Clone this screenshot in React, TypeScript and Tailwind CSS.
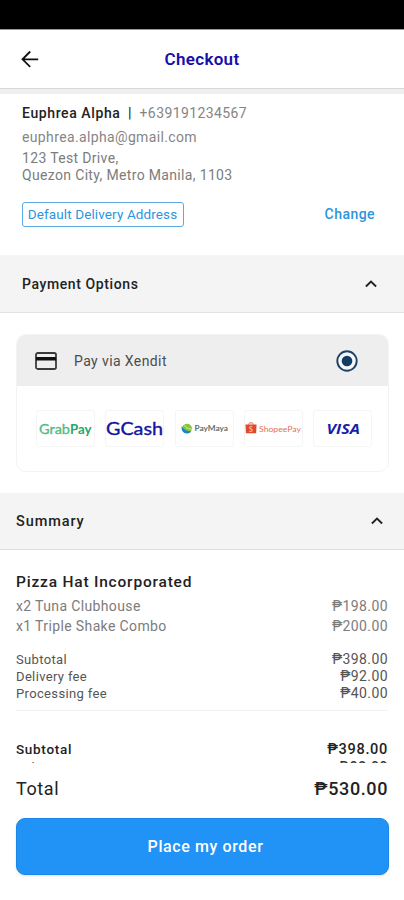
import React from 'react'

interface PriceLine {
  label: string
  amount: string
}

const orderItems: PriceLine[] = [
  { label: 'x2 Tuna Clubhouse', amount: '₱198.00' },
  { label: 'x1 Triple Shake Combo', amount: '₱200.00' },
]

const fees: PriceLine[] = [
  { label: 'Subtotal', amount: '₱398.00' },
  { label: 'Delivery fee', amount: '₱92.00' },
  { label: 'Processing fee', amount: '₱40.00' },
]

const ChevronUp = () => (
  <svg width="12" height="8" viewBox="0 0 12 8" fill="none" stroke="#222" strokeWidth="1.9">
    <path d="M.9 6.5 6 1.5l5.1 5" />
  </svg>
)

const BackArrow = () => (
  <svg width="18" height="18" viewBox="0 0 18 18" fill="none" stroke="#111" strokeWidth="1.8">
    <path d="M17.2 9.3H1.8M9.2 1.5 1.5 9.3l7.7 7.5" />
  </svg>
)

const CardIcon = () => (
  <svg width="22" height="18" viewBox="0 0 22 18" fill="none">
    <rect x="1" y="1" width="20" height="16" rx="1.8" stroke="#3a3a3a" strokeWidth="1.8" />
    <path d="M1 6.8h20" stroke="#111" strokeWidth="3.4" />
  </svg>
)

const RadioOn = () => (
  <svg width="22" height="22" viewBox="0 0 22 22" fill="none">
    <circle cx="11" cy="11" r="9.7" fill="#f6f8fa" stroke="#1d4468" strokeWidth="1.9" />
    <circle cx="11" cy="11" r="5.3" fill="#123c64" />
  </svg>
)

const GrabPay = () => (
  <svg width="58" height="36" viewBox="0 0 58 36" className="font-['Lato',sans-serif]">
    <text x="2" y="22.5" fontSize="13.5" fill="#4fba86" stroke="#4fba86" strokeWidth="0.3" textLength="31" lengthAdjust="spacingAndGlyphs">Grab</text>
    <text x="33" y="22.5" fontSize="13" fontWeight="700" fill="#2aa568" textLength="21.5" lengthAdjust="spacingAndGlyphs">Pay</text>
  </svg>
)

const GCash = () => (
  <svg width="58" height="36" viewBox="0 0 58 36" className="overflow-visible font-['Lato',sans-serif]">
    <text x="0" y="24" fontSize="17.5" fill="#14149c" stroke="#14149c" strokeWidth="0.35" textLength="57" lengthAdjust="spacingAndGlyphs">GCash</text>
  </svg>
)

const PayMaya = () => (
  <svg width="58" height="36" viewBox="0 0 58 36" className="font-['Lato',sans-serif]">
    <ellipse cx="11" cy="17.5" rx="5" ry="4.7" fill="#86c440" />
    <path d="M5.8 15.2c-1 4 1.400 7.200 5.400 7.200 2 0 3.400-.8 4-2.200-3.800.4-7-1-9.400-5Z" fill="#1685c9" />
    <path d="M8.500 13.600c.8 3 3 4.200 7.400 4.600" stroke="#e6f4d6" strokeWidth="0.7" fill="none" />
    <text x="18.500" y="19.700" fontSize="6.500" fontWeight="700" fill="#5b706d" textLength="33.500" lengthAdjust="spacingAndGlyphs">PayMaya</text>
  </svg>
)

const ShopeePay = () => (
  <svg width="58" height="36" viewBox="0 0 58 36" className="font-['Lato',sans-serif]">
    <path d="M.5 13.500h11l-.3 8.800H.9Z" fill="#e04a2c" />
    <path d="M3.500 13.500c.2-2.200 4.800-2.200 5 0" fill="none" stroke="#e04a2c" strokeWidth="0.9" />
    <text x="3.900" y="20.700" fontSize="7" fontWeight="700" fill="#f8c5b8">S</text>
    <text x="14" y="20.700" fontSize="8.300" fill="#e0705a" textLength="42" lengthAdjust="spacingAndGlyphs">ShopeePay</text>
  </svg>
)

const Visa = () => (
  <svg width="58" height="36" viewBox="0 0 58 36" className="font-['Open_Sans',sans-serif]">
    <text x="12.5" y="22.5" fontSize="14.5" fontWeight="700" fontStyle="italic" fill="#1b1fa8" textLength="33.5" lengthAdjust="spacingAndGlyphs">VISA</text>
  </svg>
)

const channels = [
  { id: 'grabpay', Logo: GrabPay },
  { id: 'gcash', Logo: GCash },
  { id: 'paymaya', Logo: PayMaya },
  { id: 'shopeepay', Logo: ShopeePay },
  { id: 'visa', Logo: Visa },
]

const Line: React.FC<PriceLine & { className: string; amountClassName?: string }> = ({
  label,
  amount,
  className,
  amountClassName = 'text-[14px] tracking-[0.4px]',
}) => (
  <div className={`flex items-center justify-between ${className}`}>
    <span>{label}</span>
    <span className={amountClassName}>{amount}</span>
  </div>
)

const App: React.FC = () => {
  return (
    <div className="flex h-[900px] w-[404px] flex-col overflow-hidden bg-white font-['Roboto',sans-serif] text-[#222] whitespace-nowrap">
      {/* Status bar */}
      <div className="h-[30px] shrink-0 border-b border-[#999] bg-black" />

      {/* Header */}
      <header className="grid h-[58px] shrink-0 grid-cols-[1fr_auto_1fr] items-center px-[21px]">
        <button className="w-fit" aria-label="Back">
          <BackArrow />
        </button>
        <h1 className="text-[17px] leading-5 font-semibold tracking-[0.3px] text-[#1410a8]">Checkout</h1>
      </header>
      <div className="h-1.5 shrink-0 border-t border-[#dadada] bg-[#efefef]" />

      {/* Delivery address */}
      <section className="h-[161px] shrink-0 px-[22px] pt-[10px]">
        <p className="text-[14px] leading-[18px] tracking-[0.6px]">
          <span className="font-medium">Euphrea Alpha</span>
          <span className="px-[7.5px] font-medium">|</span>
          <span className="tracking-[0.4px] text-[#858585]">+639191234567</span>
        </p>
        <p className="mt-1.5 text-[14px] leading-[18px] tracking-[0.36px] text-[#858585]">euphrea.alpha@gmail.com</p>
        <p className="mt-1 text-[14px] leading-[17px] tracking-[0.34px] text-[#7c7c7c]">
          123 Test Drive,
          <br />
          Quezon City, Metro Manila, 1103
        </p>
        <div className="mt-[18px] flex items-center justify-between pr-[7px] text-[#2d95dc]">
          <span className="flex h-[25px] w-[162px] items-center justify-center rounded-[3px] border border-[#5aabe4] pr-px text-[13.5px] tracking-[0.12px]">
            Default Delivery Address
          </span>
          <button className="text-[14px] font-medium tracking-[0.45px]">Change</button>
        </div>
      </section>

      {/* Payment options */}
      <div className="flex h-[58px] shrink-0 items-center justify-between border-b border-[#e2e2e2] bg-[#f4f4f4] pr-[27px] pl-[22px]">
        <h2 className="pt-px text-[14px] font-medium tracking-[0.6px]">Payment Options</h2>
        <ChevronUp />
      </div>
      <section className="h-[180px] shrink-0 pt-[21px] pr-[15px] pl-4">
        <div className="h-[138px] overflow-hidden rounded-[10px] border border-[#f3f3f3]">
          <div className="flex h-[51px] items-center bg-[#eeeeee] pr-[30px] pl-[18px]">
            <CardIcon />
            <span className="ml-[17px] flex-1 pt-px text-[14px] tracking-[0.4px] text-[#4c4c4c]">Pay via Xendit</span>
            <RadioOn />
          </div>
          <div className="flex justify-between pt-[24px] pr-4 pl-[19px]">
            {channels.map(({ id, Logo }) => (
              <div key={id} className="h-[37px] w-[59px] rounded-[3px] border border-[#f5f5f5]">
                <Logo />
              </div>
            ))}
          </div>
        </div>
      </section>

      {/* Summary */}
      <div className="flex h-[57px] shrink-0 items-center justify-between border-b border-[#dedede] bg-[#f4f4f4] pr-[21px] pl-4">
        <h2 className="pt-px text-[14.5px] font-medium tracking-[0.9px]">Summary</h2>
        <ChevronUp />
      </div>
      <section className="h-[213px] shrink-0 overflow-hidden px-4 pt-[22px]">
        <h3 className="text-[15.5px] leading-5 font-medium tracking-[0.8px]">Pizza Hat Incorporated</h3>
        <div className="mt-[4px]">
          {orderItems.map((item) => (
            <Line key={item.label} {...item} className="text-[14px] leading-5 tracking-[0.37px] text-[#7c7c7c]" />
          ))}
        </div>
        <div className="mt-[15px] border-b border-[#f3f3f3] pb-[8px]">
          {fees.map((fee) => (
            <Line key={fee.label} {...fee} className="text-[13px] leading-[17px] tracking-[0.35px] text-[#555]" />
          ))}
        </div>
        {/* Scrolls under the footer */}
        <div className="mt-[30px]">
          <Line
            label="Subtotal"
            amount="₱398.00"
            className="text-[13.5px] leading-[17px] font-medium tracking-[0.7px]"
            amountClassName="text-[14.5px] tracking-[0.7px]"
          />
          <Line
            label="Delivery Fee"
            amount="₱92.00"
            className="pt-px text-[13px] leading-[17px] text-[#555]"
            amountClassName="text-[14px] font-medium tracking-[0.5px] text-[#333]"
          />
        </div>
      </section>

      {/* Order footer */}
      <footer className="flex-1 pt-[14px] pr-[15px] pl-4">
        <div className="flex items-center justify-between pr-px leading-6 font-medium">
          <span className="text-[18px] font-normal tracking-[0.6px]">Total</span>
          <span className="text-[18px] tracking-[0.6px]">₱530.00</span>
        </div>
        <button className="mt-[17px] h-[57px] w-full rounded-[9px] border border-[#1a87e6] bg-[#2192f6] pl-1.5 text-[16px] font-medium tracking-[0.6px] text-white shadow-sm">
          Place my order
        </button>
      </footer>
    </div>
  )
}

export default App
